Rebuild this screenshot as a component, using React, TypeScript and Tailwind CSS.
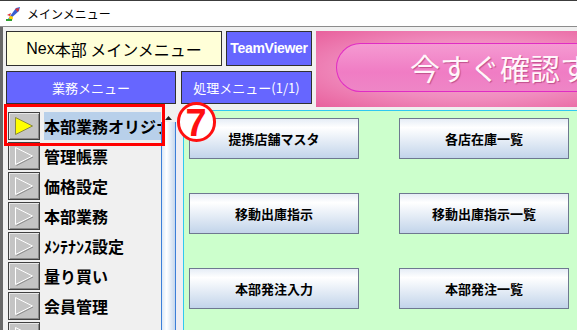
import React from "react";

const jp = "font-['Noto_Sans_CJK_JP','Noto_Sans',sans-serif]";

const menuItems = ["本部業務オリジナル", "管理帳票", "価格設定", "本部業務", "ﾒﾝﾃﾅﾝｽ設定", "量り買い", "会員管理", ""];

const actions = ["提携店舗マスタ", "各店在庫一覧", "移動出庫指示", "移動出庫指示一覧", "本部発注入力", "本部発注一覧"];

function Arrow({ active }: { active?: boolean }) {
  return (
    <svg width="20" height="20" viewBox="0 0 20 20">
      {active ? (
        <polygon points="1.5,1.5 18.5,10 1.5,18.5" fill="#ffff00" stroke="#8a8a40" strokeWidth="1" />
      ) : (
        <>
          <polyline points="1.5,18.5 1.5,1.5 18.5,10" fill="none" stroke="#ffffff" strokeWidth="1" />
          <line x1="1.5" y1="18.5" x2="18.5" y2="10" stroke="#ffffff" strokeWidth="1" />
          <line x1="2.5" y1="19.5" x2="19" y2="11" stroke="#8c8c8c" strokeWidth="1" />
        </>
      )}
    </svg>
  );
}

function MenuRow({ label, active }: { label: string; active?: boolean }) {
  return (
    <div className="h-[30px] flex items-center">
      <div className="ml-[2px] w-[32px] h-[28px] shrink-0 flex items-center justify-center bg-[#c4c4c4] border border-[#404040] shadow-[inset_1px_1px_0_#e8e8e8,inset_-1px_-1px_0_#8a8a8a]">
        <Arrow active={active} />
      </div>
      <div
        className={
          "ml-[4px] h-[28px] min-w-0 flex-1 flex items-center overflow-hidden whitespace-nowrap text-[16px] font-semibold text-black " +
          (active ? "bg-[#b8d0ea]" : "")
        }
      >
        {label}
      </div>
    </div>
  );
}

export default function App() {
  return (
    <div className={"relative w-[577px] h-[330px] overflow-hidden bg-[#f0f0f0] " + jp}>
      {/* title bar */}
      <div className="h-[27px] bg-white border-t border-[#3c3c3c] border-b border-b-[#8c8c8c] flex items-center pl-[5px]">
        <svg width="17" height="17" viewBox="0 0 17 17">
          <path d="M3 14 L11 3 L15 2 L14 6 L4 15 Z" fill="#3a5fd0" />
          <path d="M10 4 L14 3 L13 7 Z" fill="#e03030" />
          <circle cx="6" cy="13" r="2" fill="#ffd000" />
          <path d="M2 10 L6 8 L5 11 Z" fill="#e03030" />
          <rect x="1" y="14" width="6" height="2" fill="#30a030" />
        </svg>
        <span className="ml-[5px] text-[12px] text-black">メインメニュー</span>
      </div>

      <div className="flex h-[303px]">
        <div className="w-[3px] shrink-0 bg-[#686868]" />
        <div className="flex-1 min-w-0 flex flex-col">
          {/* header */}
          <div className="flex pt-[4px] pl-[3px]">
            <div className="flex flex-col gap-[5px] shrink-0">
              <div className="flex gap-[4px]">
                <div className="w-[216px] h-[35px] bg-[#ffffd8] border border-[#303030] flex items-center justify-center text-[16px] text-black">
                  <span className="font-['Liberation_Sans',sans-serif]">Nex</span>本部 メインメニュー
                </div>
                <div className="w-[86px] h-[35px] bg-[#6666ff] border border-[#303030] flex items-center justify-center text-white font-bold text-[14px] tracking-[-0.3px] font-['Liberation_Sans',sans-serif]">
                  TeamViewer
                </div>
              </div>
              <div className="flex gap-[5px]">
                <div className="w-[170px] h-[33px] bg-[#6666ff] border border-[#303030] flex items-center justify-center text-white text-[13px]">
                  業務メニュー
                </div>
                <div className="w-[131px] h-[33px] bg-[#6666ff] border border-[#303030] flex items-center justify-center text-white text-[13px]">
                  処理メニュー(1/1)
                </div>
              </div>
            </div>
            <div className="ml-[4px] min-w-0 flex-1 h-[76px] pt-[12px] overflow-hidden bg-[radial-gradient(ellipse_at_60%_50%,#f9b4d6_0%,#f08cbe_55%,#e8609c_100%)]">
              <div className="ml-[20px] h-[49px] rounded-l-full border border-r-0 border-[#e02cc4] bg-[linear-gradient(to_bottom,#f59ad2,#f07cc4_60%,#ee86c6)] flex items-center pl-[73px] whitespace-nowrap overflow-hidden">
                <span className="text-[30px] text-[#fff6fb] [text-shadow:1px_1px_1px_#c0508c]">今すぐ確認する</span>
              </div>
            </div>
          </div>

          {/* lower part */}
          <div className="mt-[3px] flex flex-1 min-h-0">
            <div className="pl-[3px] w-[158px] shrink-0 pt-[1px]">
              {menuItems.map((m, i) => (
                <MenuRow key={i} label={m} active={i === 0} />
              ))}
            </div>
            <div className="w-[15px] shrink-0 flex flex-col">
              <div className="h-[12px] flex items-end justify-center pb-[2px]">
                <svg width="7" height="4" viewBox="0 0 7 4">
                  <polygon points="0,4 3.5,0 7,4" fill="#202020" />
                </svg>
              </div>
              <div className="flex-1 border-x border-[#3c7fd8] bg-[linear-gradient(to_right,#dce8f6,#ffffff_35%,#c6d8ee)]" />
            </div>
            <div className="w-[7px] shrink-0 bg-[#eeeef4]" />
            <div className="flex-1 min-w-0 bg-[#ccffcc] border-t border-l border-[#30c8f0] pt-[7px] pl-[5px]">
              <div className="grid grid-cols-[170px_170px] gap-x-[40px] gap-y-[34px]">
                {actions.map((a) => (
                  <div
                    key={a}
                    className="h-[41px] border border-[#6e7890] bg-[linear-gradient(to_bottom,#e6edf6_0%,#ffffff_22%,#c2d4ea_100%)] flex items-center justify-center text-[13px] font-bold text-black"
                  >
                    {a}
                  </div>
                ))}
              </div>
            </div>
          </div>
        </div>
      </div>

      {/* annotation overlays */}
      <div className="absolute left-[4px] top-[104px] w-[161px] h-[42px] border-[3px] border-[#ff0000]" />
      <div className="absolute left-[177px] top-[102px] w-[39px] h-[40px] rounded-full border-[3px] border-[#ff1010] bg-white flex items-center justify-center">
        <span className="text-[#ff1010] font-bold text-[38px] leading-none -ml-[1px] mt-[2px] font-['Liberation_Sans',sans-serif]">7</span>
      </div>
    </div>
  );
}
